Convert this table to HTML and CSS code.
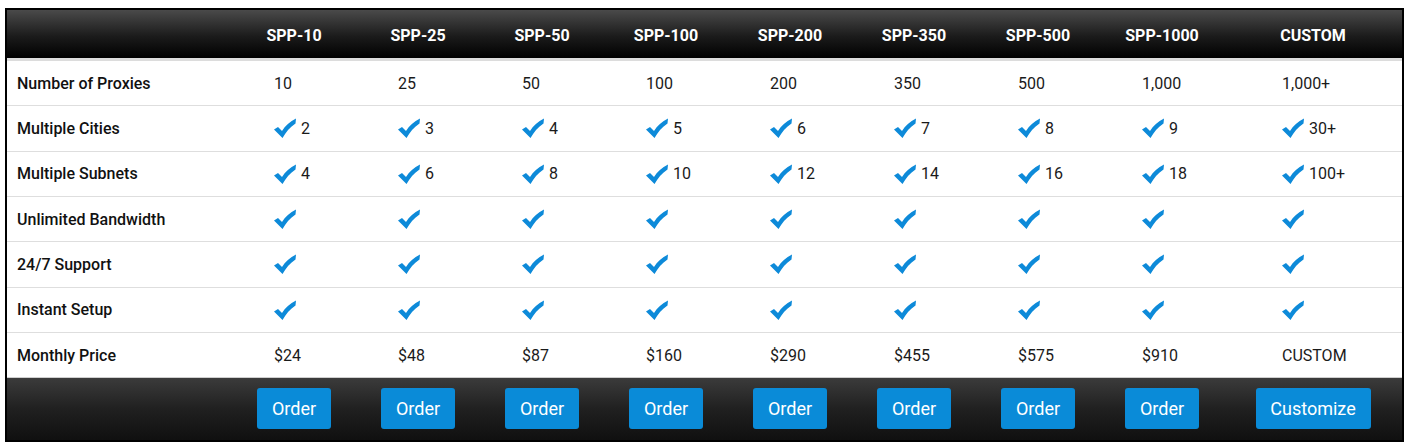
FILE: index.html
```html
<!DOCTYPE html>
<html>
<head>
<meta charset="utf-8">
<link rel="stylesheet" href="styles.css">
</head>
<body>
<svg width="0" height="0" class="defs">
  <defs>
    <symbol id="chk" viewBox="0 0 22 20">
      <path d="M0 11.5 L4 9 L8 13 C11 8 16 3.5 22 0.5 L21.5 5.5 C16 9 12 14 8.5 20 Z" fill="#0d8ad9"/>
    </symbol>
  </defs>
</svg>
<div class="pricing">
  <div class="row head">
    <div class="c lab"></div>
    <div class="c">SPP-10</div>
    <div class="c">SPP-25</div>
    <div class="c">SPP-50</div>
    <div class="c">SPP-100</div>
    <div class="c">SPP-200</div>
    <div class="c">SPP-350</div>
    <div class="c">SPP-500</div>
    <div class="c">SPP-1000</div>
    <div class="c">CUSTOM</div>
  </div>
  <div class="row">
    <div class="c lab">Number of Proxies</div>
    <div class="c">10</div><div class="c">25</div><div class="c">50</div><div class="c">100</div><div class="c">200</div><div class="c">350</div><div class="c">500</div><div class="c">1,000</div><div class="c cu">1,000+</div>
  </div>
  <div class="row">
    <div class="c lab">Multiple Cities</div>
    <div class="c"><svg class="ck"><use href="#chk"/></svg>2</div>
    <div class="c"><svg class="ck"><use href="#chk"/></svg>3</div>
    <div class="c"><svg class="ck"><use href="#chk"/></svg>4</div>
    <div class="c"><svg class="ck"><use href="#chk"/></svg>5</div>
    <div class="c"><svg class="ck"><use href="#chk"/></svg>6</div>
    <div class="c"><svg class="ck"><use href="#chk"/></svg>7</div>
    <div class="c"><svg class="ck"><use href="#chk"/></svg>8</div>
    <div class="c"><svg class="ck"><use href="#chk"/></svg>9</div>
    <div class="c cu"><svg class="ck"><use href="#chk"/></svg>30+</div>
  </div>
  <div class="row">
    <div class="c lab">Multiple Subnets</div>
    <div class="c"><svg class="ck"><use href="#chk"/></svg>4</div>
    <div class="c"><svg class="ck"><use href="#chk"/></svg>6</div>
    <div class="c"><svg class="ck"><use href="#chk"/></svg>8</div>
    <div class="c"><svg class="ck"><use href="#chk"/></svg>10</div>
    <div class="c"><svg class="ck"><use href="#chk"/></svg>12</div>
    <div class="c"><svg class="ck"><use href="#chk"/></svg>14</div>
    <div class="c"><svg class="ck"><use href="#chk"/></svg>16</div>
    <div class="c"><svg class="ck"><use href="#chk"/></svg>18</div>
    <div class="c cu"><svg class="ck"><use href="#chk"/></svg>100+</div>
  </div>
  <div class="row">
    <div class="c lab">Unlimited Bandwidth</div>
    <div class="c"><svg class="ck"><use href="#chk"/></svg></div>
    <div class="c"><svg class="ck"><use href="#chk"/></svg></div>
    <div class="c"><svg class="ck"><use href="#chk"/></svg></div>
    <div class="c"><svg class="ck"><use href="#chk"/></svg></div>
    <div class="c"><svg class="ck"><use href="#chk"/></svg></div>
    <div class="c"><svg class="ck"><use href="#chk"/></svg></div>
    <div class="c"><svg class="ck"><use href="#chk"/></svg></div>
    <div class="c"><svg class="ck"><use href="#chk"/></svg></div>
    <div class="c cu"><svg class="ck"><use href="#chk"/></svg></div>
  </div>
  <div class="row">
    <div class="c lab">24/7 Support</div>
    <div class="c"><svg class="ck"><use href="#chk"/></svg></div>
    <div class="c"><svg class="ck"><use href="#chk"/></svg></div>
    <div class="c"><svg class="ck"><use href="#chk"/></svg></div>
    <div class="c"><svg class="ck"><use href="#chk"/></svg></div>
    <div class="c"><svg class="ck"><use href="#chk"/></svg></div>
    <div class="c"><svg class="ck"><use href="#chk"/></svg></div>
    <div class="c"><svg class="ck"><use href="#chk"/></svg></div>
    <div class="c"><svg class="ck"><use href="#chk"/></svg></div>
    <div class="c cu"><svg class="ck"><use href="#chk"/></svg></div>
  </div>
  <div class="row">
    <div class="c lab">Instant Setup</div>
    <div class="c"><svg class="ck"><use href="#chk"/></svg></div>
    <div class="c"><svg class="ck"><use href="#chk"/></svg></div>
    <div class="c"><svg class="ck"><use href="#chk"/></svg></div>
    <div class="c"><svg class="ck"><use href="#chk"/></svg></div>
    <div class="c"><svg class="ck"><use href="#chk"/></svg></div>
    <div class="c"><svg class="ck"><use href="#chk"/></svg></div>
    <div class="c"><svg class="ck"><use href="#chk"/></svg></div>
    <div class="c"><svg class="ck"><use href="#chk"/></svg></div>
    <div class="c cu"><svg class="ck"><use href="#chk"/></svg></div>
  </div>
  <div class="row last">
    <div class="c lab">Monthly Price</div>
    <div class="c">$24</div><div class="c">$48</div><div class="c">$87</div><div class="c">$160</div><div class="c">$290</div><div class="c">$455</div><div class="c">$575</div><div class="c">$910</div><div class="c cu">CUSTOM</div>
  </div>
  <div class="row foot">
    <div class="c lab"></div>
    <div class="c"><a class="btn">Order</a></div>
    <div class="c"><a class="btn">Order</a></div>
    <div class="c"><a class="btn">Order</a></div>
    <div class="c"><a class="btn">Order</a></div>
    <div class="c"><a class="btn">Order</a></div>
    <div class="c"><a class="btn">Order</a></div>
    <div class="c"><a class="btn">Order</a></div>
    <div class="c"><a class="btn">Order</a></div>
    <div class="c"><a class="btn wide">Customize</a></div>
  </div>
</div>
</body>
</html>
```
FILE: styles.css
```css
html, body {
  margin: 0;
  padding: 0;
  background: #fff;
}
body {
  padding: 8px 5px 0 5px;
  font-family: Roboto, "Liberation Sans", Arial, sans-serif;
}
.defs {
  position: absolute;
  width: 0;
  height: 0;
}
.pricing {
  width: 1395px;
  border: 2px solid #000;
  background: #fff;
}
.row {
  display: grid;
  grid-template-columns: 225px repeat(8, 124px) 178px;
  height: 45.34px;
  border-bottom: 1px solid #dedede;
  box-sizing: border-box;
  align-items: center;
  font-size: 16px;
  color: #1a1a1a;
}
.row.last {
  border-bottom: 1px solid #cfcfcf;
}
.c {
  display: flex;
  align-items: center;
  padding-left: 42px;
}
.c.cu {
  padding-left: 58px;
}
.c.lab {
  padding-left: 10px;
  font-weight: 500;
  color: #111;
}
.ck {
  width: 22px;
  height: 20px;
  margin-right: 5px;
  flex: none;
}
.head {
  height: 51px;
  padding-top: 3px;
  background: linear-gradient(#4a4a4a, #1b1b1b 55%, #000);
  border-bottom: 3px solid #dcdcdc;
  color: #fff;
  font-weight: 700;
}
.head .c, .foot .c {
  justify-content: center;
  padding-left: 0;
}
.foot {
  height: 62px;
  border-bottom: 0;
  background: linear-gradient(#3b3b3b, #202020 50%, #101010);
  padding-bottom: 1px;
}
.btn {
  display: block;
  width: 74px;
  height: 41px;
  line-height: 41px;
  text-align: center;
  background: #0a8bd8;
  color: #fff;
  font-size: 18px;
  border-radius: 3px;
}
.btn.wide {
  width: 115px;
}
```
